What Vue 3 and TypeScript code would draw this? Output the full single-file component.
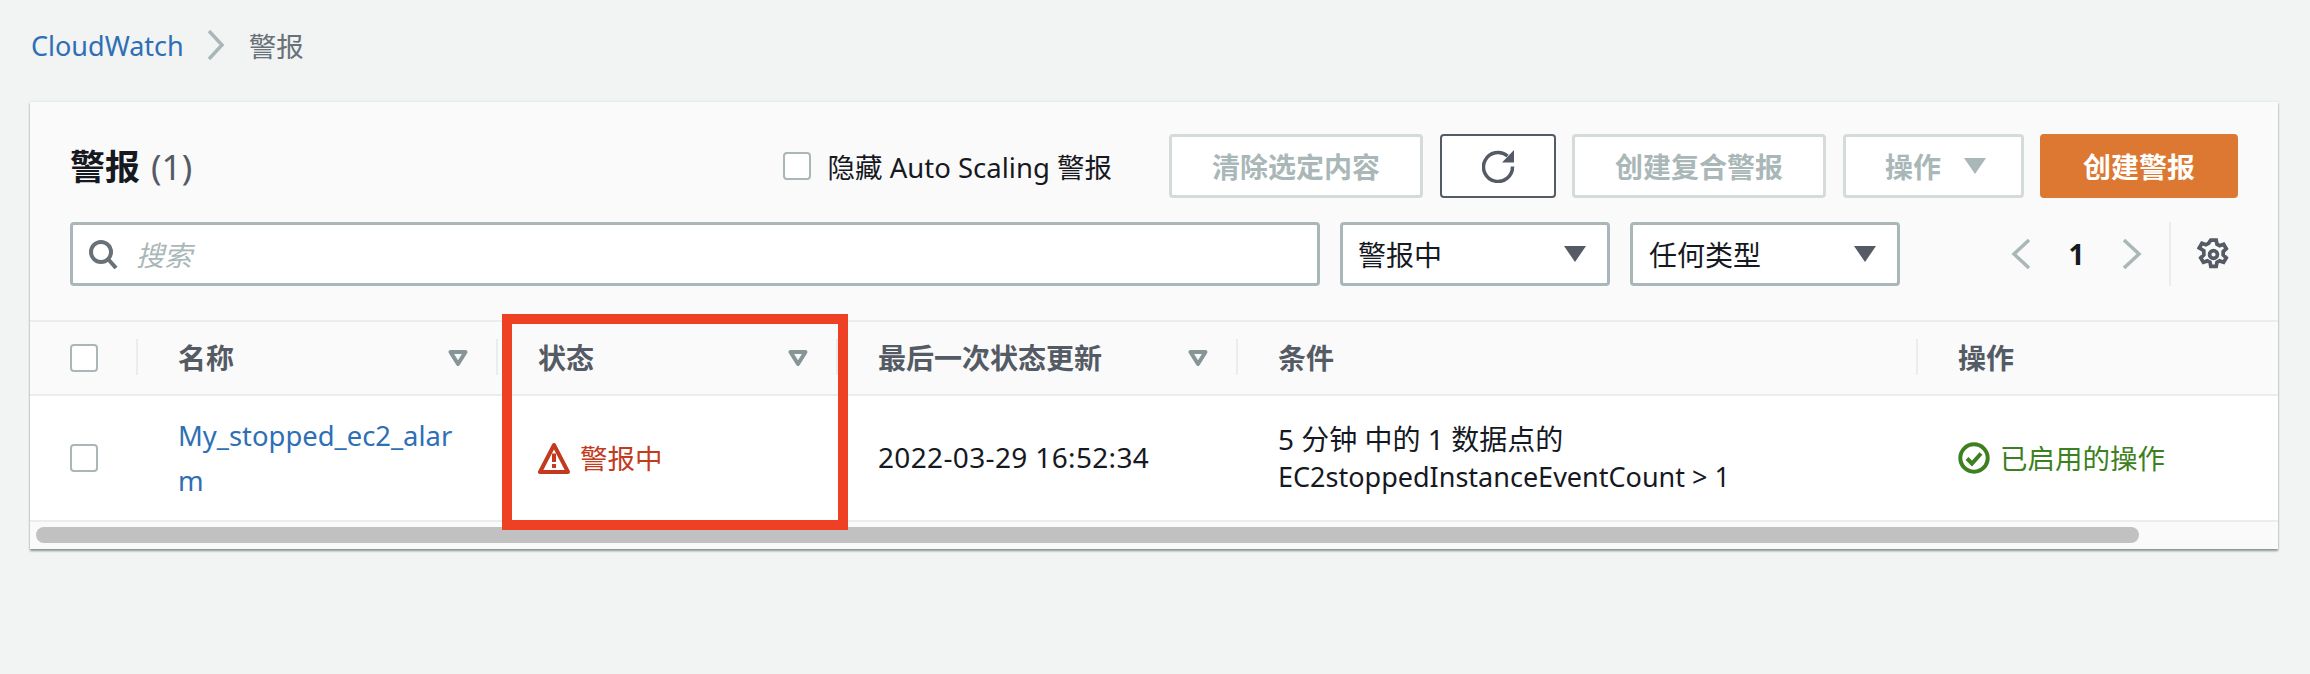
<script setup lang="ts">
const columns = [
  { label: '名称', sortable: true },
  { label: '状态', sortable: true },
  { label: '最后一次状态更新', sortable: true },
  { label: '条件', sortable: false },
  { label: '操作', sortable: false },
];
</script>

<template>
<div class="page">
  <nav class="crumbs">
    <a class="crumb-link">CloudWatch</a>
    <svg class="crumb-sep" viewBox="0 0 18 30"><path d="M2 1l13 14L2 29" /></svg>
    <span class="crumb-current">警报</span>
  </nav>

  <section class="card">
    <div class="toolbar">
      <h1 class="title">警报 <span class="count">(1)</span></h1>
      <label class="hide-scaling"><span class="box"></span>隐藏 Auto Scaling 警报</label>
      <button class="btn btn-clear" disabled>清除选定内容</button>
      <button class="btn btn-refresh">
        <svg viewBox="0 0 33 33"><path class="arc" d="M25.500 6A14.500 14.500 0 1 0 30.500 16.500" /><path class="head" d="M32 0v12.500H20z" /></svg>
      </button>
      <button class="btn btn-composite" disabled>创建复合警报</button>
      <button class="btn btn-actions" disabled>操作<i class="caret caret-light"></i></button>
      <button class="btn btn-primary">创建警报</button>
    </div>

    <div class="filters">
      <div class="search">
        <svg viewBox="0 0 30 30"><circle cx="13" cy="13" r="10" /><path d="M20 20l8 9" /></svg>
        <span class="placeholder">搜索</span>
      </div>
      <div class="select select-state">警报中<i class="caret"></i></div>
      <div class="select select-type">任何类型<i class="caret"></i></div>
      <div class="pager">
        <svg class="pager-arrow" viewBox="0 0 20 30"><path d="M18 1L3 15l15 14" /></svg>
        <b>1</b>
        <svg class="pager-arrow" viewBox="0 0 20 30"><path d="M2 1l15 14L2 29" /></svg>
      </div>
      <div class="settings">
        <svg viewBox="0 0 16 16"><path d="M6.700 1h2.600l.4 2 1.300.7 1.900-.7 1.300 2.200-1.500 1.400v1.600l1.500 1.400-1.300 2.200-1.900-.7-1.300.7-.4 2H6.700l-.4-2-1.300-.7-1.900.7-1.300-2.200 1.500-1.400V6.200L1.100 4.800l1.300-2.200 1.900.7 1.300-.7z" /><circle cx="8" cy="8" r="1.900" /></svg>
      </div>
    </div>

    <div class="grid grid-head">
      <div class="cell cell-check"><span class="box"></span></div>
      <div v-for="col in columns" :key="col.label" class="cell head-cell">
        <span>{{ col.label }}</span>
        <svg v-if="col.sortable" class="sort" viewBox="0 0 20 16"><path d="M2.500 2h15L10 14z" /></svg>
      </div>
    </div>

    <div class="grid grid-row">
      <div class="cell cell-check"><span class="box"></span></div>
      <div class="cell name-cell"><a>My_stopped_ec2_alar<br>m</a></div>
      <div class="cell state-cell">
        <svg viewBox="0 0 32 32"><path class="tri" d="M16 3L2 30h28z" /><path class="mark" d="M14 11.500h4V20h-4zM14 22h4v4h-4z" /></svg>
        警报中
      </div>
      <div class="cell date-cell">2022-03-29 16:52:34</div>
      <div class="cell cond-cell"><div class="cond-text"><span class="cond-first">5 分钟 中的 1 数据点的</span><br>EC2stoppedInstanceEventCount &gt; 1</div></div>
      <div class="cell ok-cell">
        <svg viewBox="0 0 32 32"><circle cx="16" cy="16" r="13.700" /><path d="M9 16.500l5 5 9-10" /></svg>
        已启用的操作
      </div>
    </div>

    <div class="scroll-track"><div class="scroll-thumb"></div></div>

    <div class="highlight"></div>
  </section>
</div>
</template>

<style scoped>
.page {
  width: 2310px;
  height: 674px;
  box-sizing: border-box;
  padding: 0 32px 0 30px;
  background: #f2f3f3;
  color: #16191f;
  font-family: "Noto Sans", "Noto Sans CJK SC", sans-serif;
  font-size: 28px;
  overflow: hidden;
}

.crumbs {
  height: 102px;
  display: flex;
  align-items: center;
  padding-bottom: 12px;
  box-sizing: border-box;
}

.crumb-link {
  color: #2e6fb5;
  margin-left: 1px;
  font-size: 27px;
}

.crumb-sep {
  width: 18px;
  height: 30px;
  margin: 0 24px 0 23px;
  fill: none;
  stroke: #aab7b8;
  stroke-width: 3.500;
}

.crumb-current {
  color: #687078;
  font-size: 27.500px;
}

.card {
  position: relative;
  background: #fafafa;
  height: 447px;
  box-sizing: border-box;
  box-shadow: 0 2px 2px #879596, 0 0 2px #d5dbdb;
}

.toolbar {
  display: flex;
  align-items: center;
  height: 64px;
  padding: 32px 40px 0 40px;
  box-sizing: content-box;
}

.title {
  margin: 0 auto 0 0;
  padding-bottom: 4px;
  font-size: 35px;
  font-weight: 700;
}

.count {
  font-weight: 400;
  color: #545b64;
  margin-left: 2px;
}

.hide-scaling {
  display: flex;
  align-items: center;
  gap: 17px;
  margin-right: 57px;
  font-size: 27.500px;
}

.box {
  display: block;
  width: 28px;
  height: 28px;
  box-sizing: border-box;
  border: 2px solid #aab7b8;
  border-radius: 4px;
  background: #fff;
}

.btn {
  height: 64px;
  box-sizing: border-box;
  border: 3px solid #d5dbdb;
  border-radius: 4px;
  background: #fff;
  font: inherit;
  font-weight: 700;
  color: #aab7b8;
  display: flex;
  align-items: center;
  justify-content: center;
  padding: 0;
}

.btn-clear { width: 254px; margin-right: 17px; }
.btn-composite { width: 254px; margin: 0 17px 0 16px; }
.btn-actions { width: 181px; gap: 23px; margin-right: 16px; padding-left: 4px; }

.btn-refresh {
  width: 116px;
  border: 2px solid #545b64;
}

.btn-refresh svg {
  width: 33px;
  height: 33px;
}

.arc {
  fill: none;
  stroke: #545b64;
  stroke-width: 3.500;
}

.head {
  fill: #545b64;
}

.btn-primary {
  width: 198px;
  background: #dd7833;
  border-color: #dd7833;
  color: #fff;
}

.caret {
  display: block;
  width: 0;
  height: 0;
  border-left: 11px solid transparent;
  border-right: 11px solid transparent;
  border-top: 16px solid #545b64;
}

.caret-light {
  border-top-color: #aab7b8;
}

.filters {
  display: flex;
  align-items: center;
  height: 64px;
  margin-top: 24px;
  padding-left: 40px;
  margin-bottom: 34px;
}

.search {
  width: 1250px;
  height: 64px;
  box-sizing: border-box;
  border: 3px solid #aab7b8;
  border-radius: 4px;
  background: #fff;
  display: flex;
  align-items: center;
  padding-left: 15px;
  gap: 18px;
}

.search svg {
  width: 30px;
  height: 30px;
  fill: none;
  stroke: #687078;
  stroke-width: 4;
}

.placeholder {
  font-style: italic;
  color: #aab7b8;
}

.select {
  height: 64px;
  box-sizing: border-box;
  border: 3px solid #aab7b8;
  border-radius: 4px;
  background: #fff;
  display: flex;
  align-items: center;
  justify-content: space-between;
  padding: 0 21px 0 16px;
}

.select-state { width: 270px; margin-left: 20px; padding-left: 15px; }
.select-type { width: 270px; margin-left: 20px; }

.pager {
  display: flex;
  align-items: center;
  margin-left: 111px;
  width: 131px;
  justify-content: space-between;
}

.pager-arrow {
  width: 20px;
  height: 30px;
  fill: none;
  stroke: #aab7b8;
  stroke-width: 3.500;
}

.settings {
  margin-left: 27px;
  height: 64px;
  border-left: 2px solid #eaeded;
  display: flex;
  align-items: center;
  padding-left: 26px;
}

.settings svg {
  width: 33px;
  height: 33px;
  fill: none;
  stroke: #545b64;
  stroke-width: 1.800;
}

.grid {
  display: grid;
  grid-template-columns: 106px 360px 340px 400px 680px 362px;
  box-sizing: border-box;
  border-bottom: 2px solid #eaeded;
}

.cell {
  display: flex;
  align-items: center;
  box-sizing: border-box;
  padding-left: 42px;
}

.cell-check {
  padding-left: 40px;
}

.grid-head {
  height: 76px;
  border-top: 2px solid #eaeded;
}

.head-cell {
  position: relative;
  justify-content: space-between;
  font-weight: 700;
  color: #545b64;
  padding-right: 28px;
  padding-bottom: 2px;
}

.head-cell::before {
  content: "";
  position: absolute;
  left: 0;
  top: 17px;
  height: 36px;
  border-left: 2px solid #eaeded;
}

.sort {
  width: 20px;
  height: 16px;
  margin-top: 2px;
  fill: none;
  stroke: #879596;
  stroke-width: 4;
  stroke-linejoin: round;
}

.grid-row {
  height: 126px;
  background: #fff;
}

.name-cell a {
  color: #2e6fb5;
  font-size: 27.400px;
  line-height: 45px;
}

.state-cell {
  color: #c33b1e;
  gap: 10px;
  padding-bottom: 2px;
  font-size: 27.500px;
}

.state-cell svg {
  width: 32px;
  height: 32px;
  flex: none;
  margin-top: 2px;
}

.tri {
  fill: none;
  stroke: #c33b1e;
  stroke-width: 4;
  stroke-linejoin: round;
}

.mark {
  fill: #c33b1e;
}

.date-cell {
  padding-bottom: 2px;
  letter-spacing: 0.350px;
}

.cond-text {
  font-size: 27px;
  line-height: 37px;
}

.cond-first {
  font-size: 28px;
}

.ok-cell {
  color: #3c8020;
  gap: 10px;
  padding-bottom: 2px;
  font-size: 27.500px;
}

.ok-cell svg {
  width: 32px;
  height: 32px;
  flex: none;
  margin-top: 2px;
  fill: none;
  stroke: #3c8020;
  stroke-width: 4;
}

.scroll-track {
  padding: 5px 139px 0 6px;
}

.scroll-thumb {
  height: 16px;
  border-radius: 8px;
  background: #c1c1c1;
}

.highlight {
  position: absolute;
  left: 472px;
  top: 212px;
  width: 346px;
  height: 216px;
  box-sizing: border-box;
  border: 10px solid #ee4025;
  pointer-events: none;
}
</style>

<style>
html, body {
  margin: 0;
  background: #f2f3f3;
}
</style>
